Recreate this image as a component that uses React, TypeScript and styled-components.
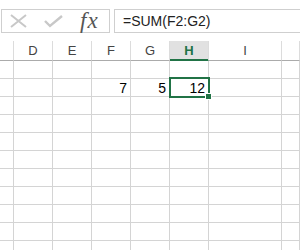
import React from "react";
import styled, { createGlobalStyle } from "styled-components";

const GlobalStyle = createGlobalStyle`
  html, body {
    margin: 0;
    padding: 0;
    background: #ffffff;
  }
  body {
    font-family: "Liberation Sans", Arial, sans-serif;
  }
`;

const Page = styled.div`
  width: 300px;
  height: 250px;
  overflow: hidden;
  background: #ffffff;
`;

const FormulaBar = styled.div`
  display: flex;
  gap: 4px;
  padding: 9px 0 0 1px;
  height: 24px;
`;

const ButtonBox = styled.div`
  box-sizing: border-box;
  width: 109px;
  height: 24px;
  border: 1px solid #cfcfcf;
  display: flex;
  align-items: center;
  gap: 16px;
  padding-left: 8px;
`;

const Fx = styled.span`
  font-family: "Liberation Serif", "Times New Roman", serif;
  font-style: italic;
  font-size: 23px;
  color: #555555;
  line-height: 22px;
  letter-spacing: 1px;
  margin-top: -1px;
`;

const FormulaInput = styled.div`
  box-sizing: border-box;
  flex: 1;
  height: 24px;
  margin-right: -10px;
  border: 1px solid #cfcfcf;
  padding-left: 8px;
  font-size: 14px;
  line-height: 22px;
  color: #222222;
`;

const Grid = styled.div`
  display: grid;
  grid-template-columns: 14px 39px 39px 39px 39px 39px 73px 1fr;
  margin-top: 8px;
`;

const HeaderCell = styled.div<{ $active?: boolean }>`
  box-sizing: border-box;
  height: 20px;
  border-right: 1px solid #dcdcdc;
  border-bottom: 1px solid ${(p) => (p.$active ? "#217346" : "#ababab")};
  box-shadow: ${(p) => (p.$active ? "inset 0 -1px 0 #217346" : "none")};
  background: ${(p) => (p.$active ? "#e1e1e1" : "#ffffff")};
  color: ${(p) => (p.$active ? "#217346" : "#444444")};
  font-weight: ${(p) => (p.$active ? "bold" : "normal")};
  font-size: 13px;
  line-height: 19px;
  text-align: center;
`;

const Cell = styled.div`
  box-sizing: border-box;
  position: relative;
  height: 18px;
  border-right: 1px solid #d4d4d4;
  border-bottom: 1px solid #d4d4d4;
  padding: 2px 3px 0 0;
  font-size: 14px;
  line-height: 15px;
  text-align: right;
  color: #000000;
`;

const Selection = styled.div`
  position: absolute;
  z-index: 2;
  top: -2px;
  left: -1px;
  right: -2px;
  bottom: -2px;
  border: 2px solid #217346;
  pointer-events: none;
`;

const FillHandle = styled.div`
  position: absolute;
  right: -4px;
  bottom: -4px;
  width: 5px;
  height: 5px;
  background: #217346;
  border: 1px solid #ffffff;
`;

const columns = ["", "D", "E", "F", "G", "H", "I", ""];

const data: Record<number, Record<string, string>> = {
  1: { F: "7", G: "5", H: "12" },
};

export default function App() {
  const rows = Array.from({ length: 11 }, (_, i) => i);
  return (
    <Page>
      <GlobalStyle />
      <FormulaBar>
        <ButtonBox>
          <svg width="18" height="14" viewBox="0 0 18 14">
            <path
              d="M1 1 L16 13 M16 1 L1 13"
              stroke="#c8c8c8"
              strokeWidth="2"
              fill="none"
            />
          </svg>
          <svg width="20" height="14" viewBox="0 0 20 14">
            <path
              d="M1 7 L6 12 L18 2"
              stroke="#c8c8c8"
              strokeWidth="2.4"
              fill="none"
            />
          </svg>
          <Fx>fx</Fx>
        </ButtonBox>
        <FormulaInput>=SUM(F2:G2)</FormulaInput>
      </FormulaBar>
      <Grid>
        {columns.map((c, i) => (
          <HeaderCell key={"h" + i} $active={c === "H"}>
            {c}
          </HeaderCell>
        ))}
        {rows.map((r) =>
          columns.map((c, i) => (
            <Cell key={r + "-" + i}>
              {c && data[r]?.[c]}
              {r === 1 && c === "H" && (
                <Selection>
                  <FillHandle />
                </Selection>
              )}
            </Cell>
          ))
        )}
      </Grid>
    </Page>
  );
}
